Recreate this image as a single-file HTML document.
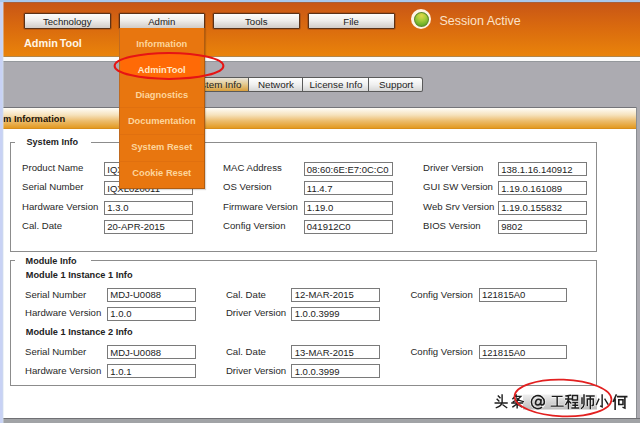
<!DOCTYPE html>
<html><head><meta charset="utf-8"><style>
html,body{margin:0;padding:0}
body{width:640px;height:423px;overflow:hidden;position:relative;background:#fff;font-family:"Liberation Sans",sans-serif}
.t{position:absolute;white-space:nowrap;line-height:1;font-family:"Liberation Sans",sans-serif}
.r{position:absolute}
.btn{position:absolute;box-sizing:border-box;border:1px solid #5a3218;box-shadow:0 0 0 0.6px rgba(110,50,20,0.55);background:linear-gradient(#fdfcfb,#efedeb 45%,#d2ccc8);border-radius:1px}
.tab{position:absolute;box-sizing:border-box;border:1px solid #5a5a5a;border-left:0;background:linear-gradient(#ffffff,#f0f0f0 50%,#d6d6d6)}
.tab.act{background:linear-gradient(#e9e5dc,#e6cc94 45%,#d89e3c)}
.fs{position:absolute;box-sizing:border-box;border:1px solid #8c8c8c}
.lgbg{position:absolute;background:#fff}
.inp{position:absolute;box-sizing:border-box;border:1px solid #7a7a7a;background:#fff}
.dd{position:absolute;box-sizing:border-box;background:#e8760f;border-left:1px solid #c06a20;border-right:1px solid #b05c10;border-bottom:1px solid #b05c10;box-shadow:1px 1px 1px rgba(0,0,0,0.15)}
.ddsep{position:absolute;left:0;right:0;height:1px;background:#e0700f}
</style></head><body>
<div class="r" style="left:0;top:0;width:640px;height:2px;background:#a9c8ec"></div>
<div class="r" style="left:3px;top:2px;width:637px;height:1px;background:#a8603c"></div>
<div class="r" style="left:3px;top:3px;width:637px;height:54px;background:linear-gradient(#c85616,#d8680f 40%,#ea840a)"></div>
<div class="r" style="left:3px;top:56px;width:637px;height:1.3px;background:#b48648"></div>
<div class="r" style="left:3px;top:57px;width:637px;height:4px;background:#fbfbfa"></div>
<div class="r" style="left:3px;top:61px;width:637px;height:1px;background:#94989c"></div>
<div class="r" style="left:3px;top:62px;width:637px;height:45px;background:#acabb1"></div>
<div class="r" style="left:3px;top:107px;width:633px;height:1px;background:#747479"></div>
<div class="r" style="left:636px;top:107px;width:4px;height:316px;background:#acabb1"></div>
<div class="r" style="left:635.5px;top:107px;width:1.5px;height:312px;background:#8a8d91"></div>
<div class="r" style="left:3px;top:108px;width:632.5px;height:20px;background:linear-gradient(#fffdf8,#f6e2bc 35%,#ecbc6c 65%,#e39a22)"></div>
<div class="r" style="left:3px;top:128px;width:632.5px;height:1px;background:#d88e1c"></div>
<div class="r" style="left:3px;top:417.5px;width:637px;height:1.5px;background:#707074"></div>
<div class="r" style="left:3px;top:419px;width:637px;height:4px;background:#a1a3a6"></div>
<div class="r" style="left:411.2px;top:9.4px;width:20.2px;height:20px;border-radius:50%;background:#fff4e6"></div>
<div class="r" style="left:413.7px;top:11.9px;width:15.2px;height:15px;box-sizing:border-box;border:1px solid #5e8a2a;border-radius:50%;background:radial-gradient(circle at 50% 22%,#e2d848,#a6cc3a 40%,#6cb02a 75%,#4c9420)"></div>
<div class="btn" style="left:24px;top:13px;width:86.5px;height:16px"></div>
<div class="t" style="left:24px;width:86.5px;text-align:center;top:16.87px;font-size:9.6px;color:#202020">Technology</div>
<div class="btn" style="left:118.5px;top:13px;width:86.5px;height:16px"></div>
<div class="t" style="left:118.5px;width:86.5px;text-align:center;top:16.87px;font-size:9.6px;color:#202020">Admin</div>
<div class="btn" style="left:213px;top:13px;width:86.5px;height:16px"></div>
<div class="t" style="left:213px;width:86.5px;text-align:center;top:16.87px;font-size:9.6px;color:#202020">Tools</div>
<div class="btn" style="left:307.5px;top:13px;width:87.0px;height:16px"></div>
<div class="t" style="left:307.5px;width:87.0px;text-align:center;top:16.87px;font-size:9.6px;color:#202020">File</div>
<div class="t" style="left:24.00px;top:37.67px;font-size:10.9px;font-weight:bold;color:#fff6e6;word-spacing:-1.2px">Admin Tool</div>
<div class="t" style="left:439.50px;top:14.82px;font-size:12.5px;color:#fbe2c8;">Session Active</div>
<div class="tab act" style="left:182px;top:77px;width:67px;height:15px"></div>
<div class="t" style="left:182px;width:67px;text-align:center;top:79.90px;font-size:9.8px;color:#1e1e1e">System Info</div>
<div class="tab" style="left:249px;top:77px;width:53.69999999999999px;height:15px"></div>
<div class="t" style="left:249px;width:53.69999999999999px;text-align:center;top:79.90px;font-size:9.8px;color:#1e1e1e">Network</div>
<div class="tab" style="left:302.7px;top:77px;width:66.69999999999999px;height:15px"></div>
<div class="t" style="left:302.7px;width:66.69999999999999px;text-align:center;top:79.90px;font-size:9.8px;color:#1e1e1e">License Info</div>
<div class="tab" style="left:369.4px;top:77px;width:53.60000000000002px;height:15px;border-radius:0 3px 2px 0"></div>
<div class="t" style="left:369.4px;width:53.60000000000002px;text-align:center;top:79.90px;font-size:9.8px;color:#1e1e1e">Support</div>
<div class="t" style="left:-21.70px;top:114.53px;font-size:9.3px;font-weight:bold;color:#1a1208;">System Information</div>
<div class="fs" style="left:9.5px;top:142px;width:587.5px;height:109.5px"></div>
<div class="lgbg" style="left:15px;top:136px;width:76px;height:10px"></div>
<div class="t" style="left:26.50px;top:137.90px;font-size:9.1px;font-weight:bold;color:#222;">System Info</div>
<div class="t" style="left:22.10px;top:162.97px;font-size:9.6px;color:#282828;">Product Name</div>
<div class="inp" style="left:104px;top:161.9px;width:89px;height:14.300000000000011px"></div>
<div class="t" style="left:107.30px;top:164.86px;font-size:9.5px;color:#222;">IQXL020011</div>
<div class="t" style="left:223.10px;top:162.97px;font-size:9.6px;color:#282828;">MAC Address</div>
<div class="inp" style="left:303.5px;top:161.9px;width:89.5px;height:14.300000000000011px"></div>
<div class="t" style="left:306.80px;top:164.86px;font-size:9.5px;color:#222;">08:60:6E:E7:0C:C0</div>
<div class="t" style="left:423.10px;top:162.97px;font-size:9.6px;color:#282828;">Driver Version</div>
<div class="inp" style="left:498px;top:161.9px;width:89px;height:14.300000000000011px"></div>
<div class="t" style="left:501.30px;top:164.86px;font-size:9.5px;color:#222;">138.1.16.140912</div>
<div class="t" style="left:22.10px;top:182.47px;font-size:9.6px;color:#282828;">Serial Number</div>
<div class="inp" style="left:104px;top:181.1px;width:89px;height:14.300000000000011px"></div>
<div class="t" style="left:107.30px;top:184.06px;font-size:9.5px;color:#222;">IQXL020011</div>
<div class="t" style="left:223.10px;top:182.47px;font-size:9.6px;color:#282828;">OS Version</div>
<div class="inp" style="left:303.5px;top:181.1px;width:89.5px;height:14.300000000000011px"></div>
<div class="t" style="left:306.80px;top:184.06px;font-size:9.5px;color:#222;">11.4.7</div>
<div class="t" style="left:423.10px;top:182.47px;font-size:9.6px;color:#282828;">GUI SW Version</div>
<div class="inp" style="left:498px;top:181.1px;width:89px;height:14.300000000000011px"></div>
<div class="t" style="left:501.30px;top:184.06px;font-size:9.5px;color:#222;">1.19.0.161089</div>
<div class="t" style="left:22.10px;top:201.67px;font-size:9.6px;color:#282828;">Hardware Version</div>
<div class="inp" style="left:104px;top:200.5px;width:89px;height:14.300000000000011px"></div>
<div class="t" style="left:107.30px;top:203.46px;font-size:9.5px;color:#222;">1.3.0</div>
<div class="t" style="left:223.10px;top:201.67px;font-size:9.6px;color:#282828;">Firmware Version</div>
<div class="inp" style="left:303.5px;top:200.5px;width:89.5px;height:14.300000000000011px"></div>
<div class="t" style="left:306.80px;top:203.46px;font-size:9.5px;color:#222;">1.19.0</div>
<div class="t" style="left:423.10px;top:201.67px;font-size:9.6px;color:#282828;">Web Srv Version</div>
<div class="inp" style="left:498px;top:200.5px;width:89px;height:14.300000000000011px"></div>
<div class="t" style="left:501.30px;top:203.46px;font-size:9.5px;color:#222;">1.19.0.155832</div>
<div class="t" style="left:22.10px;top:220.77px;font-size:9.6px;color:#282828;">Cal. Date</div>
<div class="inp" style="left:104px;top:219.5px;width:89px;height:14.300000000000011px"></div>
<div class="t" style="left:107.30px;top:222.46px;font-size:9.5px;color:#222;">20-APR-2015</div>
<div class="t" style="left:223.10px;top:220.77px;font-size:9.6px;color:#282828;">Config Version</div>
<div class="inp" style="left:303.5px;top:219.5px;width:89.5px;height:14.300000000000011px"></div>
<div class="t" style="left:306.80px;top:222.46px;font-size:9.5px;color:#222;">041912C0</div>
<div class="t" style="left:423.10px;top:220.77px;font-size:9.6px;color:#282828;">BIOS Version</div>
<div class="inp" style="left:498px;top:219.5px;width:89px;height:14.300000000000011px"></div>
<div class="t" style="left:501.30px;top:222.46px;font-size:9.5px;color:#222;">9802</div>
<div class="fs" style="left:9.5px;top:260px;width:587.5px;height:125.5px"></div>
<div class="lgbg" style="left:15px;top:254px;width:76px;height:10px"></div>
<div class="t" style="left:25.60px;top:256.50px;font-size:9.1px;font-weight:bold;color:#222;">Module Info</div>
<div class="t" style="left:25.80px;top:271.01px;font-size:9.2px;font-weight:bold;color:#222;">Module 1 Instance 1 Info</div>
<div class="t" style="left:25.00px;top:289.57px;font-size:9.6px;color:#282828;">Serial Number</div>
<div class="inp" style="left:107px;top:287.8px;width:89px;height:13.899999999999977px"></div>
<div class="t" style="left:110.30px;top:290.36px;font-size:9.5px;color:#222;">MDJ-U0088</div>
<div class="t" style="left:25.00px;top:308.47px;font-size:9.6px;color:#282828;">Hardware Version</div>
<div class="inp" style="left:107px;top:306.9px;width:89px;height:13.900000000000034px"></div>
<div class="t" style="left:110.30px;top:309.46px;font-size:9.5px;color:#222;">1.0.0</div>
<div class="t" style="left:225.90px;top:289.57px;font-size:9.6px;color:#282828;">Cal. Date</div>
<div class="inp" style="left:291.4px;top:287.8px;width:88.30000000000001px;height:13.899999999999977px"></div>
<div class="t" style="left:294.70px;top:290.36px;font-size:9.5px;color:#222;">12-MAR-2015</div>
<div class="t" style="left:225.90px;top:308.47px;font-size:9.6px;color:#282828;">Driver Version</div>
<div class="inp" style="left:291.4px;top:306.9px;width:88.30000000000001px;height:13.900000000000034px"></div>
<div class="t" style="left:294.70px;top:309.46px;font-size:9.5px;color:#222;">1.0.0.3999</div>
<div class="t" style="left:410.40px;top:289.57px;font-size:9.6px;color:#282828;">Config Version</div>
<div class="inp" style="left:478.7px;top:287.8px;width:88.59999999999997px;height:13.899999999999977px"></div>
<div class="t" style="left:482.00px;top:290.36px;font-size:9.5px;color:#222;">121815A0</div>
<div class="t" style="left:25.80px;top:328.31px;font-size:9.2px;font-weight:bold;color:#222;">Module 1 Instance 2 Info</div>
<div class="t" style="left:25.00px;top:346.87px;font-size:9.6px;color:#282828;">Serial Number</div>
<div class="inp" style="left:107px;top:345.1px;width:89px;height:13.899999999999977px"></div>
<div class="t" style="left:110.30px;top:347.66px;font-size:9.5px;color:#222;">MDJ-U0088</div>
<div class="t" style="left:25.00px;top:365.77px;font-size:9.6px;color:#282828;">Hardware Version</div>
<div class="inp" style="left:107px;top:364.2px;width:89px;height:13.900000000000034px"></div>
<div class="t" style="left:110.30px;top:366.76px;font-size:9.5px;color:#222;">1.0.1</div>
<div class="t" style="left:225.90px;top:346.87px;font-size:9.6px;color:#282828;">Cal. Date</div>
<div class="inp" style="left:291.4px;top:345.1px;width:88.30000000000001px;height:13.899999999999977px"></div>
<div class="t" style="left:294.70px;top:347.66px;font-size:9.5px;color:#222;">13-MAR-2015</div>
<div class="t" style="left:225.90px;top:365.77px;font-size:9.6px;color:#282828;">Driver Version</div>
<div class="inp" style="left:291.4px;top:364.2px;width:88.30000000000001px;height:13.900000000000034px"></div>
<div class="t" style="left:294.70px;top:366.76px;font-size:9.5px;color:#222;">1.0.0.3999</div>
<div class="t" style="left:410.40px;top:346.87px;font-size:9.6px;color:#282828;">Config Version</div>
<div class="inp" style="left:478.7px;top:345.1px;width:88.59999999999997px;height:13.899999999999977px"></div>
<div class="t" style="left:482.00px;top:347.66px;font-size:9.5px;color:#222;">121815A0</div>
<div class="dd" style="left:118.5px;top:28px;width:86px;height:160.5px">
<div class="ddsep" style="top:79.3px"></div>
<div class="ddsep" style="top:105.9px"></div>
<div class="ddsep" style="top:132.5px"></div>
</div>
<div class="t" style="left:118.5px;width:86.5px;text-align:center;top:39.93px;font-size:9.3px;font-weight:bold;color:#fdd59c">Information</div>
<div class="t" style="left:118.5px;width:86.5px;text-align:center;top:65.68px;font-size:9.3px;font-weight:bold;color:#fdd59c">AdminTool</div>
<div class="t" style="left:118.5px;width:86.5px;text-align:center;top:91.43px;font-size:9.3px;font-weight:bold;color:#fdd59c">Diagnostics</div>
<div class="t" style="left:118.5px;width:86.5px;text-align:center;top:117.18px;font-size:9.3px;font-weight:bold;color:#fdd59c">Documentation</div>
<div class="t" style="left:118.5px;width:86.5px;text-align:center;top:142.93px;font-size:9.3px;font-weight:bold;color:#fdd59c">System Reset</div>
<div class="t" style="left:118.5px;width:86.5px;text-align:center;top:168.68px;font-size:9.3px;font-weight:bold;color:#fdd59c">Cookie Reset</div>
<svg style="position:absolute;left:0;top:0" width="640" height="423" viewBox="0 0 640 423">
<defs><clipPath id="ddc"><rect x="120.5" y="28" width="80" height="160"/></clipPath></defs>
<ellipse cx="169" cy="65.9" rx="54.4" ry="13" fill="#ff6a06" clip-path="url(#ddc)"/>
<ellipse cx="169" cy="65.9" rx="54.4" ry="13" fill="none" stroke="#e61414" stroke-width="2"/>
</svg>
<div class="t" style="left:118.5px;width:86.5px;text-align:center;top:65.68px;font-size:9.3px;font-weight:bold;color:#ffe8c8">AdminTool</div>
<svg style="position:absolute;left:0;top:0" width="640" height="423" viewBox="0 0 640 423">
<defs><linearGradient id="wg" x1="0" y1="0" x2="0" y2="1"><stop offset="0" stop-color="#f0f0f0"/><stop offset="0.5" stop-color="#d4d4d4"/><stop offset="1" stop-color="#bdbdbd"/></linearGradient></defs>
<rect x="523" y="394.5" width="74" height="15" fill="url(#wg)"/>
<g transform="translate(494.5,394.5) scale(0.95)"><path d="M4,1.5 L5.8,3.3 M2.8,5 L4.6,6.8 M0.8,9 L13.2,9 M8,0.5 L8,8 Q7.5,12 2,13.8 M9,11 L12.8,13.8" fill="none" stroke="#fff" stroke-width="2.6" stroke-linecap="round" stroke-linejoin="round" opacity="0.9"/><path d="M4,1.5 L5.8,3.3 M2.8,5 L4.6,6.8 M0.8,9 L13.2,9 M8,0.5 L8,8 Q7.5,12 2,13.8 M9,11 L12.8,13.8" fill="none" stroke="#1e1e1e" stroke-width="1.5" stroke-linecap="square"/></g><g transform="translate(510.5,394.5) scale(0.95)"><path d="M6,0.5 L2.5,4.5 M5,2 L11,2 Q8,6 3,7.5 M6.5,3.8 Q9,6.5 13.5,7.5 M1.5,9 L12.5,9 M7,7.5 L7,14 M6,10.5 L2.5,13 M8,10.5 L11.5,13" fill="none" stroke="#fff" stroke-width="2.6" stroke-linecap="round" stroke-linejoin="round" opacity="0.9"/><path d="M6,0.5 L2.5,4.5 M5,2 L11,2 Q8,6 3,7.5 M6.5,3.8 Q9,6.5 13.5,7.5 M1.5,9 L12.5,9 M7,7.5 L7,14 M6,10.5 L2.5,13 M8,10.5 L11.5,13" fill="none" stroke="#1e1e1e" stroke-width="1.5" stroke-linecap="square"/></g><g transform="translate(530.5,394.5) scale(1.05)"><circle cx="7" cy="7" r="6.2" fill="none" stroke="#fff" stroke-width="2.6" opacity="0.9"/><path d="M11,12 A6.2,6.2 0 1 1 13.2,7 Q13.2,10 11,10 Q9.6,10 9.8,8 L10.2,4.5 M10,7 Q9.5,10 7,10 Q4.5,10 4.8,7.5 Q5.2,4.5 7.8,4.5 Q10,4.5 10,7" fill="none" stroke="#1e1e1e" stroke-width="1.5"/></g><g transform="translate(550.5,394.5) scale(0.95)"><path d="M2,2 L12,2 M7,2 L7,12 M0.8,12.2 L13.2,12.2" fill="none" stroke="#fff" stroke-width="2.6" stroke-linecap="round" stroke-linejoin="round" opacity="0.9"/><path d="M2,2 L12,2 M7,2 L7,12 M0.8,12.2 L13.2,12.2" fill="none" stroke="#1e1e1e" stroke-width="1.5" stroke-linecap="square"/></g><g transform="translate(565,394.5) scale(1.0)"><path d="M1,1.5 L5.5,0.8 M0.8,4.5 L6,4.5 M3.4,1.2 L3.4,14 M3.3,5.5 L0.8,10 M3.8,6.5 L5.8,8.5 M7.5,1 L12.5,1 L12.5,5.5 L7.5,5.5 Z M8,8 L12.5,8 M8,10.8 L12.5,10.8 M7,13.5 L13.5,13.5 M10.2,8 L10.2,13.5" fill="none" stroke="#fff" stroke-width="2.6" stroke-linecap="round" stroke-linejoin="round" opacity="0.9"/><path d="M1,1.5 L5.5,0.8 M0.8,4.5 L6,4.5 M3.4,1.2 L3.4,14 M3.3,5.5 L0.8,10 M3.8,6.5 L5.8,8.5 M7.5,1 L12.5,1 L12.5,5.5 L7.5,5.5 Z M8,8 L12.5,8 M8,10.8 L12.5,10.8 M7,13.5 L13.5,13.5 M10.2,8 L10.2,13.5" fill="none" stroke="#1e1e1e" stroke-width="1.5" stroke-linecap="square"/></g><g transform="translate(580.5,394.5) scale(1.0)"><path d="M1.5,3.5 L1.5,9 M3.5,0.5 L3.5,10 Q3.3,12.5 1,13.8 M6,1.5 L13.5,1.5 M6.8,4.5 L6.8,11 M6.8,4.5 L12.8,4.5 L12.8,10.5 L11.8,11 M9.8,1.5 L9.8,14" fill="none" stroke="#fff" stroke-width="2.6" stroke-linecap="round" stroke-linejoin="round" opacity="0.9"/><path d="M1.5,3.5 L1.5,9 M3.5,0.5 L3.5,10 Q3.3,12.5 1,13.8 M6,1.5 L13.5,1.5 M6.8,4.5 L6.8,11 M6.8,4.5 L12.8,4.5 L12.8,10.5 L11.8,11 M9.8,1.5 L9.8,14" fill="none" stroke="#1e1e1e" stroke-width="1.5" stroke-linecap="square"/></g><g transform="translate(595.5,394.5) scale(0.95)"><path d="M7,0.5 L7,13 L5.5,12.2 M3.5,5 L1,10.5 M10,5 L13,10" fill="none" stroke="#fff" stroke-width="2.6" stroke-linecap="round" stroke-linejoin="round" opacity="0.9"/><path d="M7,0.5 L7,13 L5.5,12.2 M3.5,5 L1,10.5 M10,5 L13,10" fill="none" stroke="#1e1e1e" stroke-width="1.5" stroke-linecap="square"/></g><g transform="translate(612.5,394.5) scale(1.05)"><path d="M3.5,0.5 L0.8,6.5 M2.5,4.5 L2.5,14 M5,2 L13.5,2 M6,5 L10,5 L10,9.5 L6,9.5 Z M11.8,2 L11.8,13 L10.2,12.3" fill="none" stroke="#fff" stroke-width="2.6" stroke-linecap="round" stroke-linejoin="round" opacity="0.9"/><path d="M3.5,0.5 L0.8,6.5 M2.5,4.5 L2.5,14 M5,2 L13.5,2 M6,5 L10,5 L10,9.5 L6,9.5 Z M11.8,2 L11.8,13 L10.2,12.3" fill="none" stroke="#1e1e1e" stroke-width="1.5" stroke-linecap="square"/></g>
<ellipse cx="563" cy="398" rx="48.5" ry="18.3" fill="none" stroke="#e22020" stroke-width="1.7" transform="rotate(2 563 398)"/>
</svg>

<div class="r" style="left:0;top:2px;width:2px;height:421px;background:#c8d2f5"></div>
<div class="r" style="left:2px;top:2px;width:1px;height:421px;background:#cbd6f1"></div>
<div class="r" style="left:3px;top:2px;width:1px;height:421px;background:rgba(214,226,240,0.45)"></div>

</body></html>
